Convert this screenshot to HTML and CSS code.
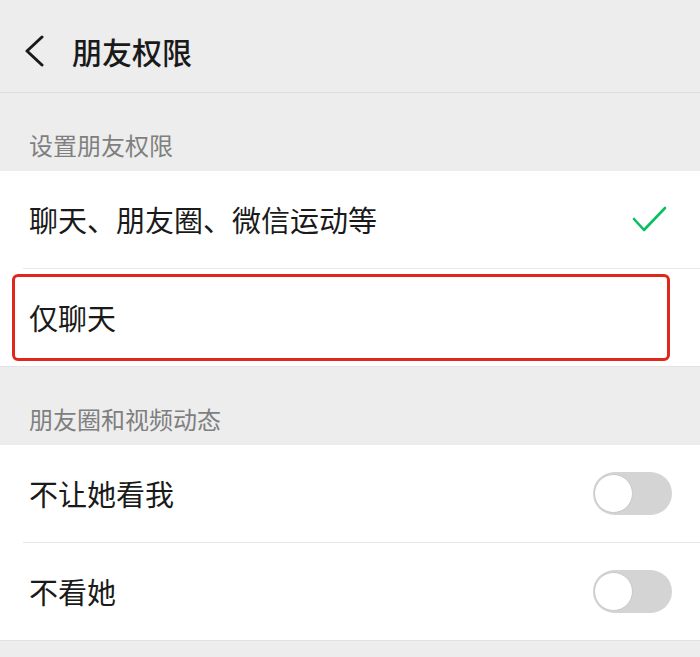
FILE: index.html
```
<!DOCTYPE html>
<html lang="zh-CN">
<head>
  <meta charset="UTF-8" />
  <meta name="viewport" content="width=device-width, initial-scale=1.0"/>
  <title>朋友权限</title>
  <link rel="stylesheet" href="styles.css">
</head>
<body>

<div class="page">
  <div class="topbar">
    <svg class="back" width="20" height="32" viewBox="0 0 20 32">
      <polyline points="17,2 2,16 17,30" fill="none" stroke="#1a1a1a" stroke-width="3" stroke-linecap="round" stroke-linejoin="round"/>
    </svg>
    <h1>朋友权限</h1>
  </div>

  <div class="group-title">设置朋友权限</div>
  <div class="group">
    <div class="row">
      <span class="row-text">聊天、朋友圈、微信运动等</span>
      <svg class="check" width="36" height="28" viewBox="0 0 36 28">
        <polyline points="2,13 12,24 33,2" fill="none" stroke="#07c160" stroke-width="2.6" stroke-linecap="round" stroke-linejoin="round"/>
      </svg>
    </div>
    <div class="row marked">
      <span class="row-text">仅聊天</span>
      <div class="mark-box"></div>
    </div>
  </div>

  <div class="group-title">朋友圈和视频动态</div>
  <div class="group">
    <div class="row">
      <span class="row-text">不让她看我</span>
      <div class="switch"><div class="knob"></div></div>
    </div>
    <div class="row">
      <span class="row-text">不看她</span>
      <div class="switch"><div class="knob"></div></div>
    </div>
  </div>
</div>

</body>
</html>
```

FILE: styles.css
```
body {
  margin: 0;
  padding: 0;
  background: #ededed;
  font-family: "Noto Sans CJK SC", "Noto Sans", sans-serif;
  color: #1a1a1a;
}
.page {
  width: 700px;
  min-height: 657px;
  background: #ededed;
}
.topbar {
  height: 93px;
  display: flex;
  align-items: center;
  padding: 9px 0 0 25px;
  border-bottom: 1px solid #dcdcdc;
  box-sizing: border-box;
}
.topbar h1 {
  margin: 0 0 0 27px;
  font-size: 30px;
  font-weight: 500;
  line-height: 1;
}
.group-title {
  padding: 37px 29px 11px;
  font-size: 24px;
  line-height: 30px;
  color: #7f7f7f;
}
.group {
  background: #fff;
  border-bottom: 1px solid #e2e2e2;
}
.row {
  position: relative;
  height: 97px;
  display: flex;
  align-items: center;
  justify-content: space-between;
  padding: 0 28px 0 29px;
}
.row + .row {
  border-top: 1px solid #e8e8e8;
  margin-left: 23px;
  padding-left: 6px;
}
.row-text {
  font-size: 29px;
  line-height: 1;
}
.check {
  margin-right: 4px;
}
.mark-box {
  position: absolute;
  left: -11px;
  right: 30px;
  top: 5px;
  bottom: 5px;
  border: 3px solid #e1261c;
  border-radius: 6px;
}
.switch {
  width: 79px;
  height: 43px;
  border-radius: 22px;
  background: #d4d4d4;
  position: relative;
}
.knob {
  position: absolute;
  left: 1px;
  top: 2px;
  width: 37px;
  height: 37px;
  border-radius: 50%;
  background: #fff;
  border: 1px solid #c8c8c8;
}
```
